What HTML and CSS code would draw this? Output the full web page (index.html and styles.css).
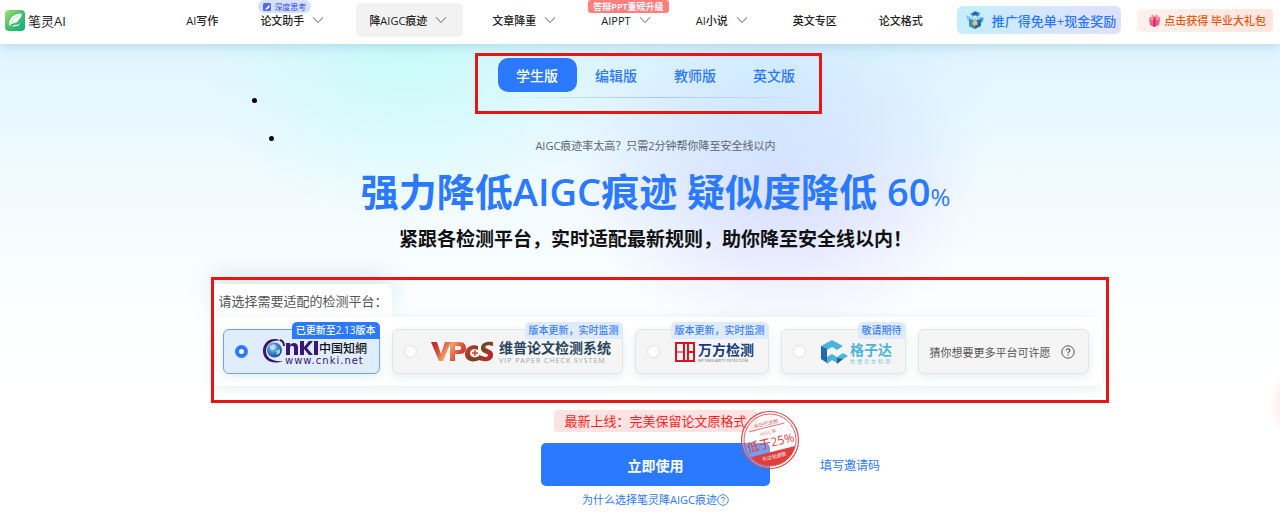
FILE: index.html
```html
<!DOCTYPE html>
<html lang="zh-CN">
<head>
    <meta charset="UTF-8">
    <meta name="viewport" content="width=device-width, initial-scale=1.0">
    <title>笔灵AI - 降AIGC痕迹</title>
    <link rel="stylesheet" href="styles.css">
</head>
<body>
    <svg width="0" height="0" class="defs" aria-hidden="true">
        <symbol id="chevron" viewBox="0 0 12 8">
            <path d="M1 1.2 6 6.6 11 1.2" fill="none" stroke="#666" stroke-width="1"/>
        </symbol>
        <symbol id="question" viewBox="0 0 14 14">
            <circle cx="7" cy="7" r="6.2" fill="none" stroke="currentColor" stroke-width="1"/>
            <path d="M5.2 5.6C5.2 3.3 8.9 3.4 8.9 5.5 8.9 6.8 7 6.9 7 8.5M7 9.6V10.7" fill="none" stroke="currentColor" stroke-width="1.1"/>
        </symbol>
    </svg>

    <header class="header">
        <a class="brand" href="#">
            <svg width="20" height="21" viewBox="0 0 20 21" aria-hidden="true">
                <defs>
                    <linearGradient id="leaf" x1="0" y1="0" x2="1" y2="1">
                        <stop offset="0" stop-color="#a5e06a"/>
                        <stop offset="0.5" stop-color="#3fc06c"/>
                        <stop offset="1" stop-color="#12b07c"/>
                    </linearGradient>
                </defs>
                <rect width="20" height="21" rx="4" fill="url(#leaf)"/>
                <path d="M4 16.5C3 9 8 3.500 16.500 3.500 17 7 15 9.500 12 10.500 13 10.700 13.500 10.700 14.200 10.500 11.500 13 8.500 12.500 6 14.500Z" fill="#fff"/>
                <path d="M4.500 16C6 12 9 8.500 13 6" fill="none" stroke="#8fdba0" stroke-width=".7"/>
                <path d="M7 16.500C9 14 13 16 15 12.800 14.500 16 11 17 7 16.500Z" fill="#e3f8e8"/>
            </svg>
            <span>笔灵AI</span>
        </a>

        <nav class="nav">
            <a class="nav-item" href="#">AI写作</a>
            <a class="nav-item has-menu" href="#">论文助手
                <svg class="chevron" aria-hidden="true"><use href="#chevron"/></svg>
                <span class="nav-badge think">
                    <svg width="8" height="8" viewBox="0 0 8 8" aria-hidden="true">
                        <rect width="8" height="8" rx="1.500" fill="#5468f0"/>
                        <path d="M2 6.500 6.500 1.500V4.500L4 6.500Z" fill="#fff"/>
                    </svg>
                    深度思考
                </span>
            </a>
            <a class="nav-item has-menu current" href="#">降AIGC痕迹
                <svg class="chevron" aria-hidden="true"><use href="#chevron"/></svg>
            </a>
            <a class="nav-item has-menu" href="#">文章降重
                <svg class="chevron" aria-hidden="true"><use href="#chevron"/></svg>
            </a>
            <a class="nav-item has-menu" href="#">AIPPT
                <svg class="chevron" aria-hidden="true"><use href="#chevron"/></svg>
                <span class="nav-badge upgrade">答辩PPT重磅升级</span>
            </a>
            <a class="nav-item has-menu" href="#">AI小说
                <svg class="chevron" aria-hidden="true"><use href="#chevron"/></svg>
            </a>
            <a class="nav-item" href="#">英文专区</a>
            <a class="nav-item" href="#">论文格式</a>
        </nav>

        <a class="promo promo-share" href="#">
            <svg width="20" height="20" viewBox="0 0 20 20" aria-hidden="true">
                <path d="M5 4 10 1 15 3 14 6 9 7Z" fill="#3c8fd0"/>
                <path d="M7 4 11 2 13 4 10 5Z" fill="#195c9c"/>
                <path d="M1 5 5 7 4 11 2 9Z" fill="#7ec8e8"/>
                <path d="M15 7 19 8 17 13 15 11Z" fill="#4b9fd9"/>
                <ellipse cx="10" cy="9" rx="6" ry="3" fill="#8bd5ed"/>
                <path d="M4 9 10 11 16 9V16L10 19 4 16Z" fill="#286da3"/>
                <path d="M4 9 10 11V19L4 16Z" fill="#3e91bf"/>
                <circle cx="10" cy="13" r="2.500" fill="#f2c069"/>
                <path d="M8 9 10 6 12 9" fill="none" stroke="#dff5ff" stroke-width="1.200"/>
            </svg>
            推广得免单+现金奖励
        </a>
        <a class="promo promo-gift" href="#">
            <svg width="13" height="13" viewBox="0 0 13 13" aria-hidden="true">
                <path d="M1 4 6 2 12 3V6L11 11 6 13 2 11Z" fill="#f05b8d"/>
                <path d="M1 3.500 6 2 12 3 11.500 6 6 6.500 1 6Z" fill="#ff8bac"/>
                <path d="M5.500 3.500 7.500 3.500 7.500 12.500 5.500 12.500Z" fill="#c92567"/>
                <path d="M6.500 3C3 3 2.500.5 4.500.8 6 1 6.500 3 6.500 3S7.500.5 9 .8C11 1.200 9 3 6.500 3Z" fill="#f4a05c"/>
            </svg>
            点击获得 毕业大礼包
        </a>
    </header>

    <main class="hero">
        <ul class="bullets" aria-hidden="true">
            <li></li>
            <li></li>
        </ul>

        <div class="tabs" role="tablist">
            <button class="tab active" type="button" role="tab" aria-selected="true">学生版</button>
            <button class="tab" type="button" role="tab">编辑版</button>
            <button class="tab" type="button" role="tab">教师版</button>
            <button class="tab" type="button" role="tab">英文版</button>
            <span class="mark mark-tabs"></span>
        </div>

        <p class="lead">AIGC痕迹率太高？只需2分钟帮你降至安全线以内</p>
        <h1>强力降低<span class="latin">AIGC</span>痕迹 疑似度降低 <span class="latin">60<small>%</small></span></h1>
        <h2>紧跟各检测平台，实时适配最新规则，助你降至安全线以内！</h2>

        <section class="platforms">
            <div class="platforms-title">请选择需要适配的检测平台：</div>
            <div class="platforms-list">
                <label class="platform selected">
                    <input type="radio" name="platform" aria-label="中国知网" checked>
                    <svg width="106" height="30" viewBox="0 0 106 30" aria-hidden="true">
                        <defs>
                            <radialGradient id="globe" cx=".4" cy=".35" r=".7">
                                <stop offset="0" stop-color="#a9dbf2"/>
                                <stop offset="0.5" stop-color="#3c86c6"/>
                                <stop offset="1" stop-color="#164a92"/>
                            </radialGradient>
                        </defs>
                        <path d="M20 4C9-2 0 6 1 15 2 24 11 28 21 24 11 25 4 21 4 14 4 7 11 2 20 4Z" fill="#3b1673"/>
                        <path d="M18 3C21 4 22 6 22 9" fill="none" stroke="#3b1673" stroke-width="2"/>
                        <circle cx="12.500" cy="13" r="7.500" fill="url(#globe)"/>
                        <path d="M8 9 12 7 14 10 11 13 8 12ZM14 14 18 12 18 16 15 18Z" fill="#d1edf5" opacity=".7"/>
                        <path d="M24 18V6H28V8C30 5 36 5 36 10V18H32V11C32 8 28 8 28 11V18ZM38 4H42V10L47 4H51L45 11 51 18H47L42 12V18H38ZM52 4H56V18H52Z" fill="#3b1673"/>
                        <text x="57" y="16" class="logo-script">中国知網</text>
                        <text x="23" y="27" class="logo-url">www.cnki.net</text>
                    </svg>
                    <span class="flag">已更新至2.13版本</span>
                </label>

                <label class="platform">
                    <input type="radio" name="platform" aria-label="维普论文检测系统">
                    <svg width="180" height="30" viewBox="0 0 180 30" aria-hidden="true">
                        <defs>
                            <linearGradient id="vpcs" x1="0" y1="0" x2="1" y2="0.200">
                                <stop offset="0" stop-color="#b51f34"/>
                                <stop offset="0.200" stop-color="#d9483b"/>
                                <stop offset="0.350" stop-color="#f0a069"/>
                                <stop offset="0.550" stop-color="#dd4734"/>
                                <stop offset="0.750" stop-color="#8e3b22"/>
                                <stop offset="0.850" stop-color="#6b4a1c"/>
                                <stop offset="1" stop-color="#b1302c"/>
                            </linearGradient>
                        </defs>
                        <path d="M0 5H6L10 17 14 5H20L12 24H8ZM19 5H29C37 5 37 17 29 17H24V24H19ZM24 9V13H28C31 13 31 9 28 9ZM47 13C40 9 36 18 42 20 44 21 46 20 48 19V23C40 27 33 22 34 16 35 9 42 7 47 9ZM62 9C56 7 53 9 55 11 57 13 63 13 62 19 61 25 53 25 48 23V18C53 20 57 21 57 18 56 16 49 16 50 10 51 5 57 4 62 5Z" fill="url(#vpcs)"/>
                        <path d="M44 13V19M41 16H47" stroke="#d94332" stroke-width="1.500"/>
                        <text x="68" y="16" class="logo-vip">维普论文检测系统</text>
                        <text x="68" y="26" class="logo-vip-en">VIP PAPER CHECK SYSTEM</text>
                    </svg>
                    <span class="flag">版本更新，实时监测</span>
                </label>

                <label class="platform">
                    <input type="radio" name="platform" aria-label="万方检测">
                    <svg width="83" height="30" viewBox="0 0 83 30" aria-hidden="true">
                        <path d="M2 6H20V24H2ZM10 6V24M14 6V24M14 15H20" fill="none" stroke="#d9131f" stroke-width="2"/>
                        <path d="M2 15H10" stroke="#d9131f" stroke-width="1"/>
                        <path d="M11 7H13V23H11Z" fill="#f5f5f5"/>
                        <text x="24" y="18" class="logo-wf">万方检测</text>
                        <text x="24" y="25" class="logo-wf-en">WF SIMILARITY DETECTION</text>
                    </svg>
                    <span class="flag">版本更新，实时监测</span>
                </label>

                <label class="platform">
                    <input type="radio" name="platform" aria-label="格子达">
                    <svg width="74" height="30" viewBox="0 0 74 30" aria-hidden="true">
                        <path d="M1 9 12 3 23 9 17 13 12 10 7 13V20L1 17Z" fill="#49b5dc"/>
                        <path d="M1 9 7 12V26L1 22Z" fill="#246aa5"/>
                        <path d="M7 20 12 17 17 20 23 16 28 19 17 26 12 23 7 27Z" fill="#49b5dc"/>
                        <path d="M17 21 23 22 17 27Z" fill="#205b98"/>
                        <text x="30" y="18" class="logo-gzd">格子达</text>
                        <text x="30" y="26" class="logo-gzd-sub">免费论文检测</text>
                    </svg>
                    <span class="flag">敬请期待</span>
                </label>

                <button class="platform wish" type="button">
                    猜你想要更多平台可许愿
                    <svg width="14" height="14" aria-hidden="true"><use href="#question"/></svg>
                </button>
            </div>
            <span class="mark mark-platforms"></span>
        </section>

        <div class="notice">最新上线：完美保留论文原格式</div>

        <div class="actions">
            <button class="start" type="button">立即使用
                <svg class="stamp" width="60" height="60" viewBox="-30 -30 60 60" aria-hidden="true">
                    <circle r="28.500" fill="#fff" fill-opacity=".3" stroke="#e04848" stroke-width="1.200"/>
                    <g transform="rotate(-14)">
                        <path d="M-23 12H23A26 26 0 0 1-23 12Z" fill="#e23d3d"/>
                        <circle r="26" fill="none" stroke="#e04848" stroke-width=".8"/>
                        <path d="M-18-13H18" stroke="#e04848" stroke-width=".7"/>
                        <text y="-15" class="stamp-small">今日已送检</text>
                        <text y="-6" class="stamp-small light">AIGC率</text>
                        <text y="7" class="stamp-big">低于25%</text>
                        <text y="19" class="stamp-small white">不过包退款</text>
                    </g>
                </svg>
            </button>
            <a class="invite" href="#">填写邀请码</a>
        </div>

        <a class="why" href="#">为什么选择笔灵降AIGC痕迹<svg width="12" height="12" aria-hidden="true"><use href="#question"/></svg></a>
    </main>
</body>
</html>
```
FILE: styles.css
```css
* {
    box-sizing: border-box;
}
body {
    margin: 0;
    font-family: "Open Sans", "Noto Sans CJK SC", sans-serif;
    font-size: 11px;
    color: #222;
    background-color: #fff;
}
a {
    color: inherit;
    text-decoration: none;
}
button {
    font-family: inherit;
    border: none;
    cursor: pointer;
}
h1, h2, p {
    margin: 0;
}
.defs {
    position: absolute;
}

/* Header */
.header {
    position: relative;
    z-index: 1;
    display: flex;
    align-items: center;
    height: 44px;
    padding: 0 7px 4px 5px;
    background-color: #fff;
    box-shadow: 0 2px 12px rgba(60, 130, 150, 0.25);
    white-space: nowrap;
}
.brand {
    display: flex;
    align-items: center;
    gap: 3px;
    font-size: 13px;
}
.nav {
    display: flex;
    gap: 16px;
    margin-left: auto;
    margin-right: 21px;
}
.nav-item {
    position: relative;
    display: flex;
    align-items: center;
    gap: 8px;
    height: 34px;
    padding: 0 13px;
    font-weight: 500;
}
.nav-item.has-menu {
    padding-right: 16px;
}
.nav-item.current {
    background-color: #f2f2f2;
    border-radius: 6px;
}
.chevron {
    width: 12px;
    height: 8px;
}
.nav-badge {
    position: absolute;
    top: -3px;
    display: flex;
    align-items: center;
    gap: 3px;
    height: 13px;
}
.nav-badge.think {
    left: 11px;
    padding: 0 5px;
    border-radius: 7px;
    font-size: 8px;
    color: #5468f0;
    background-color: #d4e1ff;
}
.nav-badge.upgrade {
    left: 0;
    padding: 0 5px;
    border-radius: 3px;
    font-size: 9px;
    font-weight: 600;
    color: #fff;
    background-color: #ff7f7f;
}
.promo {
    display: flex;
    align-items: center;
    border-radius: 6px;
    font-weight: 500;
}
.promo-share {
    gap: 7px;
    height: 28px;
    padding: 0 5px 0 8px;
    margin-right: 16px;
    font-size: 13px;
    color: #2878ff;
    background: linear-gradient(100deg, #c4efff, #e2dfff);
}
.promo-gift {
    gap: 3px;
    height: 23px;
    padding: 0 7px 0 11px;
    border-radius: 4px;
    color: #ea560b;
    background: linear-gradient(90deg, #fff1ec, #ffe5df);
}

/* Hero */
.hero {
    position: relative;
    display: flex;
    flex-direction: column;
    align-items: center;
    padding: 14px 0 15px 31px;
    overflow: hidden;
    background:
        radial-gradient(ellipse 50px 50px at calc(100% + 40px) 360px, rgba(255, 110, 110, 0.6), transparent),
        radial-gradient(ellipse 210px 170px at 32% 10px, rgba(185, 255, 246, 0.6), transparent),
        radial-gradient(ellipse 230px 180px at 60% 60px, rgba(190, 228, 255, 0.5), transparent),
        radial-gradient(ellipse 200px 160px at 61% 145px, rgba(216, 208, 255, 0.65), transparent),
        linear-gradient(#e0f5ff, #f3fbff 160px, #fcffff 270px, #fff 350px);
}
.bullets {
    position: absolute;
    top: 54px;
    left: 252px;
    margin: 0;
    padding: 0;
    list-style: none;
}
.bullets li {
    width: 5px;
    height: 5px;
    border-radius: 50%;
    background-color: #000;
}
.bullets li + li {
    margin: 33px 0 0 17px;
}

/* Red highlight boxes */
.mark {
    position: absolute;
    border: 3px solid #e81515;
    pointer-events: none;
}
.mark-tabs {
    inset: -5px -8px -16px -23px;
}
.mark-platforms {
    inset: -7px -7px -17px -2px;
}

.tabs {
    position: relative;
    display: flex;
    padding-bottom: 6px;
}
.tabs::after {
    content: "";
    position: absolute;
    left: 0;
    right: 0;
    bottom: 0;
    height: 1px;
    background: linear-gradient(90deg, transparent, #a3c8fa 50%, transparent);
}
.tab {
    width: 79px;
    height: 34px;
    padding: 0;
    border-radius: 10px;
    font-size: 14px;
    font-weight: 500;
    color: #2b79ff;
    background: none;
}
.tab.active {
    color: #fff;
    background-color: #2b79ff;
}
.lead {
    margin-top: 40px;
    line-height: 16px;
    color: #5c6470;
}
h1 {
    margin-top: 11px;
    font-size: 38px;
    line-height: 52px;
    color: #2b79ff;
}
h1 .latin {
    font-weight: 600;
}
h1 small {
    font-size: 24px;
    font-weight: 400;
}
h2 {
    margin-top: 2px;
    font-size: 19px;
    line-height: 28px;
    color: #111;
}

/* Platform picker */
.platforms {
    position: relative;
    margin: 31px 0 0 3px;
}
.platforms-title {
    width: 179px;
    height: 33px;
    padding-left: 6px;
    border-radius: 0 6px 0 0;
    font-size: 13px;
    line-height: 35px;
    white-space: nowrap;
    color: #555;
    background-color: #fff;
    box-shadow: 0 -8px 24px rgba(70, 140, 150, 0.2);
}
.platforms-list {
    position: relative;
    display: flex;
    gap: 12px;
    padding: 12px 13px 12px 10px;
    border-radius: 0 6px 6px 0;
    background-color: #fff;
    box-shadow: 0 2px 12px rgba(70, 140, 150, 0.15);
}
.platform {
    position: relative;
    display: flex;
    align-items: center;
    gap: 14px;
    height: 45px;
    padding: 0 11px;
    border: 1px solid #e2e4e6;
    border-radius: 6px;
    background-color: #f5f5f5;
    box-shadow: 0 3px 10px rgba(70, 140, 150, 0.15);
}
.platform.selected {
    border-color: #6ca3fb;
    background-color: #e0ecff;
}
.platform input {
    appearance: none;
    width: 13px;
    height: 13px;
    margin: 0;
    border: 1px solid #e0e0e0;
    border-radius: 50%;
    background-color: #fff;
}
.platform input:checked {
    border: 4px solid #2b79ff;
}
.flag {
    position: absolute;
    top: -8px;
    right: -1px;
    height: 17px;
    padding: 0 4px;
    border-radius: 5px 5px 0 0;
    font-size: 10px;
    font-weight: 500;
    line-height: 17px;
    white-space: nowrap;
    color: #3a80f8;
    background-color: #deebff;
}
.selected .flag {
    color: #fff;
    background-color: #2b79ff;
}
.platform.wish {
    gap: 10px;
    width: 171px;
    font-size: 11px;
    color: #555;
}

/* Logo lettering */
.platform svg {
    overflow: visible;
}
.logo-script {
    font-size: 12px;
    font-weight: 500;
    fill: #111;
}
.logo-url {
    font-family: "DejaVu Sans", sans-serif;
    font-size: 10px;
    letter-spacing: 1px;
    fill: #3b1673;
}
.logo-vip {
    font-size: 14px;
    font-weight: 700;
    fill: #28455f;
}
.logo-vip-en {
    font-size: 7px;
    letter-spacing: 1px;
    fill: #9ca3ab;
}
.logo-wf {
    font-size: 14px;
    font-weight: 700;
    fill: #173a86;
}
.logo-wf-en {
    font-size: 4px;
    fill: #777;
}
.logo-gzd {
    font-size: 14px;
    font-weight: 700;
    fill: #49b5dc;
}
.logo-gzd-sub {
    font-size: 5px;
    letter-spacing: 2px;
    fill: #70c4e2;
}

/* Actions */
.notice {
    margin-top: 24px;
    padding: 0 10px;
    border-radius: 4px;
    font-size: 13px;
    line-height: 22px;
    color: #ff1f1f;
    background-color: #ffe2e2;
}
.actions {
    display: grid;
    grid-template-columns: 1fr auto 1fr;
    align-items: center;
    width: 100%;
    margin-top: 11px;
}
.start {
    position: relative;
    grid-column: 2;
    width: 229px;
    height: 43px;
    border-radius: 5px;
    font-size: 14px;
    font-weight: 600;
    color: #fff;
    background-color: #2b79ff;
}
.stamp {
    position: absolute;
    top: -33px;
    right: -30px;
}
.stamp text {
    text-anchor: middle;
    fill: #e04848;
}
.stamp-small {
    font-size: 5px;
    font-weight: 400;
}
.stamp-big {
    font-size: 12px;
    font-weight: 500;
}
.stamp .light {
    opacity: 0.7;
}
.stamp .white {
    fill: #fff;
}
.invite {
    justify-self: start;
    margin-left: 50px;
    font-size: 12px;
    color: #2b79ff;
}
.why {
    display: flex;
    align-items: center;
    margin-top: 6px;
    line-height: 16px;
    color: #2b79ff;
}
```
